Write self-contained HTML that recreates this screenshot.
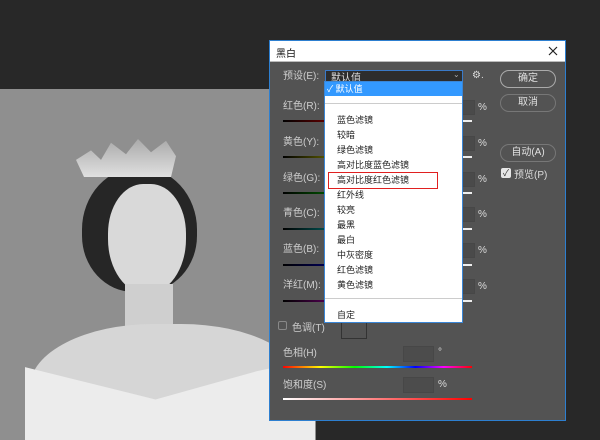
<!DOCTYPE html>
<html style="overflow:hidden"><head><meta charset="utf-8"><style>
*{margin:0;padding:0;box-sizing:border-box}
html,body{width:600px;height:440px;overflow:hidden}
body{background:#282828;position:relative;font-family:"Liberation Sans","Noto Sans CJK SC",sans-serif;font-size:10px;color:#d6d6d6}
.a{position:absolute}
.lbl{position:absolute;left:283px;font-size:10px;color:#cfcfcf;line-height:12px}
.inp{position:absolute;width:20px;height:15px;background:#4a4a4a;border:1px solid #474747;left:455px}
.pct{position:absolute;left:478px;color:#ddd;font-size:10px}
.tr{position:absolute;left:283px;width:189px;height:2px}
.btn{position:absolute;left:500px;width:56px;height:18px;border:1px solid #aaa;border-radius:9px;text-align:center;line-height:16px;color:#e0e0e0;font-size:10px}
.it{position:absolute;left:337px;font-size:9px;color:#222;line-height:12px}
</style></head><body>
<!-- photo -->
<div class="a" style="left:0;top:89px;width:316px;height:351px;background:#8f8f8f;overflow:hidden">
 <div class="a" style="left:82px;top:78px;width:115px;height:125px;border-radius:50% 50% 45% 45%;background:#262626"></div>
 <div class="a" style="left:108px;top:95px;width:78px;height:110px;border-radius:45% 45% 50% 50%;background:#d9d9d9"></div>
 <div class="a" style="left:76px;top:50px;width:100px;height:38px;background:linear-gradient(#aaa,#e0e0e0);clip-path:polygon(0 55%,15% 30%,25% 55%,35% 10%,50% 40%,62% 0,75% 35%,90% 5%,100% 45%,95% 100%,8% 100%)"></div>
 <div class="a" style="left:125px;top:195px;width:48px;height:60px;background:#cfcfcf"></div>
 <div class="a" style="left:30px;top:235px;width:275px;height:140px;border-radius:45% 45% 0 0;background:#d6d6d6"></div>
 <div class="a" style="left:25px;top:270px;width:290px;height:81px;background:#ececec;clip-path:polygon(0 10%,45% 50%,80% 15%,100% 0,100% 100%,0 100%)"></div>
</div>
<!-- dialog -->
<div class="a" style="left:269px;top:40px;width:297px;height:381px;background:#535353;border:1px solid #2d7fd0"></div>
<div class="a" style="left:270px;top:41px;width:295px;height:21px;background:#fff;border-bottom:1px solid #bbb"></div>
<div class="a" style="left:276px;top:45px;color:#111;font-size:10px">黑白</div>
<svg class="a" style="left:548px;top:46px" width="10" height="10"><path d="M1 1L9 9M9 1L1 9" stroke="#222" stroke-width="1.2"/></svg>

<div class="lbl" style="top:71px">预设(E):</div>
<div class="a" style="left:325px;top:70px;width:138px;height:12px;background:#2d2d2d;border:1px solid #3a7ac8"></div>
<div class="a" style="left:331px;top:69px;color:#ddd;font-size:10px">默认值</div>
<div class="a" style="left:453px;top:70px;color:#aaa;font-size:8px">⌄</div>
<div class="a" style="left:472px;top:70px;color:#ddd;font-size:10px">⚙.</div>
<div class="btn" style="top:70px">确定</div>
<div class="btn" style="top:94px;border-color:#777">取消</div>
<div class="btn" style="top:144px;border-color:#777">自动(A)</div>
<div class="a" style="left:501px;top:168px;width:10px;height:10px;background:#e6e6e6;border-radius:2px;color:#333;font-size:9px;line-height:10px;text-align:center">✓</div>
<div class="a" style="left:514px;top:166px;color:#ddd">预览(P)</div>

<div class="lbl" style="top:101px">红色(R):</div><div class="inp" style="top:100px"></div><div class="pct" style="top:102px">%</div>
<div class="tr" style="top:120px;background:linear-gradient(90deg,#000,#c00 50%,#eee 90%)"></div>
<div class="lbl" style="top:137px">黄色(Y):</div><div class="inp" style="top:136px"></div><div class="pct" style="top:138px">%</div>
<div class="tr" style="top:156px;background:linear-gradient(90deg,#000,#bb0 50%,#eee 90%)"></div>
<div class="lbl" style="top:173px">绿色(G):</div><div class="inp" style="top:172px"></div><div class="pct" style="top:174px">%</div>
<div class="tr" style="top:192px;background:linear-gradient(90deg,#000,#0a0 50%,#eee 90%)"></div>
<div class="lbl" style="top:208px">青色(C):</div><div class="inp" style="top:207px"></div><div class="pct" style="top:209px">%</div>
<div class="tr" style="top:228px;background:linear-gradient(90deg,#000,#0aa 50%,#eee 90%)"></div>
<div class="lbl" style="top:244px">蓝色(B):</div><div class="inp" style="top:243px"></div><div class="pct" style="top:245px">%</div>
<div class="tr" style="top:264px;background:linear-gradient(90deg,#000,#00b 50%,#eee 90%)"></div>
<div class="lbl" style="top:280px">洋红(M):</div><div class="inp" style="top:279px"></div><div class="pct" style="top:281px">%</div>
<div class="tr" style="top:300px;background:linear-gradient(90deg,#000,#a0a 50%,#eee 90%)"></div>

<div class="a" style="left:278px;top:321px;width:9px;height:9px;border:1px solid #888;border-radius:2px"></div>
<div class="a" style="left:292px;top:319px;color:#ccc">色调(T)</div>
<div class="a" style="left:341px;top:318px;width:26px;height:21px;border:1px solid #333"></div>
<div class="lbl" style="top:348px">色相(H)</div>
<div class="a" style="left:403px;top:346px;width:31px;height:16px;background:#4c4c4c;border:1px solid #474747"></div>
<div class="a" style="left:438px;top:347px;color:#ddd">°</div>
<div class="tr" style="top:366px;background:linear-gradient(90deg,#f00,#ff0 20%,#0f0 38%,#0ff 55%,#00f 70%,#f0f 85%,#f00)"></div>
<div class="lbl" style="top:380px">饱和度(S)</div>
<div class="a" style="left:403px;top:377px;width:31px;height:16px;background:#4c4c4c;border:1px solid #474747"></div>
<div class="a" style="left:438px;top:379px;color:#ddd">%</div>
<div class="tr" style="top:398px;background:linear-gradient(90deg,#fff,#f00)"></div>

<!-- dropdown -->
<div class="a" style="left:324px;top:81px;width:139px;height:242px;background:#fff;border:1px solid #3a86d6"></div>
<div class="a" style="left:325px;top:82px;width:137px;height:14px;background:#3399ff"></div>
<div class="a" style="left:327px;top:82px;color:#fff;font-size:9px;line-height:14px">✓ 默认值</div>
<div class="a" style="left:325px;top:103px;width:137px;height:1px;background:#ccc"></div>
<div class="it" style="top:114px">蓝色滤镜</div>
<div class="it" style="top:129px">较暗</div>
<div class="it" style="top:144px">绿色滤镜</div>
<div class="it" style="top:159px">高对比度蓝色滤镜</div>
<div class="a" style="left:328px;top:172px;width:110px;height:17px;border:1.5px solid #e02020"></div>
<div class="it" style="top:174px">高对比度红色滤镜</div>
<div class="it" style="top:189px">红外线</div>
<div class="it" style="top:204px">较亮</div>
<div class="it" style="top:219px">最黑</div>
<div class="it" style="top:234px">最白</div>
<div class="it" style="top:249px">中灰密度</div>
<div class="it" style="top:264px">红色滤镜</div>
<div class="it" style="top:279px">黄色滤镜</div>
<div class="a" style="left:325px;top:298px;width:137px;height:1px;background:#ccc"></div>
<div class="it" style="top:309px">自定</div>
</body></html>
